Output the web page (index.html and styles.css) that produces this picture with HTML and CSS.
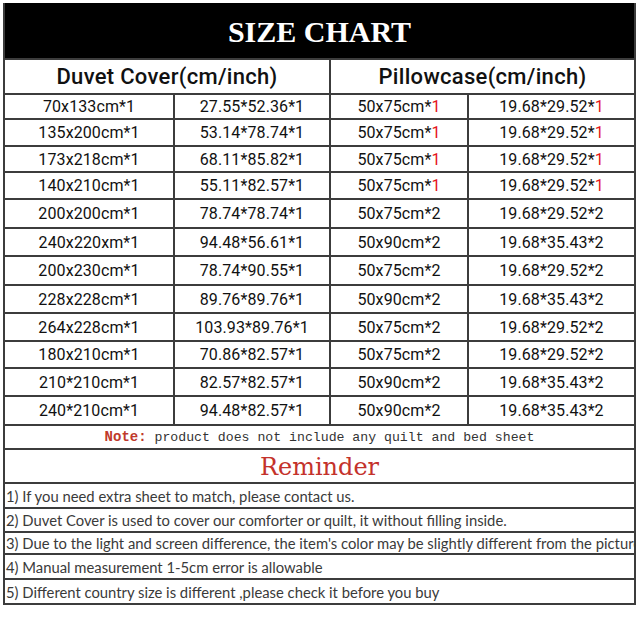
FILE: index.html
```html
<!DOCTYPE html>
<html>
<head>
<meta charset="utf-8">
<link rel="stylesheet" href="styles.css">
</head>
<body>
<div class="chart">
  <div class="title span4">SIZE CHART</div>
  <div class="head span2">Duvet Cover(cm/inch)</div>
  <div class="head span2 pil">Pillowcase(cm/inch)</div>

  <div class="c">70x133cm*1</div><div class="c">27.55*52.36*1</div><div class="c pil">50x75cm*<span class="r">1</span></div><div class="c">19.68*29.52*<span class="r">1</span></div>
  <div class="c">135x200cm*1</div><div class="c">53.14*78.74*1</div><div class="c pil">50x75cm*<span class="r">1</span></div><div class="c">19.68*29.52*<span class="r">1</span></div>
  <div class="c">173x218cm*1</div><div class="c">68.11*85.82*1</div><div class="c pil">50x75cm*<span class="r">1</span></div><div class="c">19.68*29.52*<span class="r">1</span></div>
  <div class="c">140x210cm*1</div><div class="c">55.11*82.57*1</div><div class="c pil">50x75cm*<span class="r">1</span></div><div class="c">19.68*29.52*<span class="r">1</span></div>
  <div class="c">200x200cm*1</div><div class="c">78.74*78.74*1</div><div class="c pil">50x75cm*2</div><div class="c">19.68*29.52*2</div>
  <div class="c">240x220xm*1</div><div class="c">94.48*56.61*1</div><div class="c pil">50x90cm*2</div><div class="c">19.68*35.43*2</div>
  <div class="c">200x230cm*1</div><div class="c">78.74*90.55*1</div><div class="c pil">50x75cm*2</div><div class="c">19.68*29.52*2</div>
  <div class="c">228x228cm*1</div><div class="c">89.76*89.76*1</div><div class="c pil">50x90cm*2</div><div class="c">19.68*35.43*2</div>
  <div class="c">264x228cm*1</div><div class="c">103.93*89.76*1</div><div class="c pil">50x75cm*2</div><div class="c">19.68*29.52*2</div>
  <div class="c">180x210cm*1</div><div class="c">70.86*82.57*1</div><div class="c pil">50x75cm*2</div><div class="c">19.68*29.52*2</div>
  <div class="c">210*210cm*1</div><div class="c">82.57*82.57*1</div><div class="c pil">50x90cm*2</div><div class="c">19.68*35.43*2</div>
  <div class="c">240*210cm*1</div><div class="c">94.48*82.57*1</div><div class="c pil">50x90cm*2</div><div class="c">19.68*35.43*2</div>

  <div class="note span4"><span class="note-label">Note:</span> product does not include any quilt and bed sheet</div>
  <div class="reminder span4">Reminder</div>
  <div class="line span4">1) If you need extra sheet to match, please contact us.</div>
  <div class="line span4">2) Duvet Cover is used to cover our comforter or quilt, it without filling inside.</div>
  <div class="line span4">3) Due to the light and screen difference, the item's color may be slightly different from the picture</div>
  <div class="line span4">4) Manual measurement 1-5cm error is allowable</div>
  <div class="line span4">5) Different country size is different ,please check it before you buy</div>
</div>
</body>
</html>
```

FILE: styles.css
```css
html, body {
  margin: 0;
  padding: 0;
  background: #ffffff;
}
body {
  padding: 3px 0 0 3px;
}
.chart {
  width: 633px;
  box-sizing: border-box;
  display: grid;
  grid-template-columns: 168px 154px 136px 165px;
  grid-template-rows: 55px 33px 23px 25px 24px 25px 27px 26px 27px 26px 26px 25px 26px 27px 22px 32px 23px 22px 20px 23px 23px;
  gap: 2px;
  padding: 0 2px 2px 2px;
  background: #3c3c3c;
}
.span4 { grid-column: 1 / 5; }
.span2 { grid-column: span 2; }
.title {
  background: #000;
  color: #fff;
  font-family: "Liberation Serif", serif;
  font-weight: bold;
  font-size: 30px;
  display: flex;
  align-items: center;
  justify-content: center;
  padding-top: 2px;
}
.head, .c {
  background: #fff;
  display: flex;
  align-items: center;
  justify-content: center;
  font-family: Roboto, "DejaVu Sans", sans-serif;
  color: #111;
}
.head {
  font-size: 22px;
  font-weight: 500;
  letter-spacing: 0.3px;
}
.c {
  font-size: 16px;
  letter-spacing: 0.1px;
}
.pil {
  box-shadow: -1px 0 0 #3c3c3c;
}
.r { color: #e4141b; }
.note {
  background: #fff;
  display: flex;
  align-items: center;
  justify-content: center;
  font-family: "Liberation Mono", monospace;
  font-size: 13.2px;
  color: #333;
  white-space: pre;
}
.note-label {
  color: #c0392b;
  font-weight: bold;
  font-size: 14px;
}
.reminder {
  background: #fff;
  display: flex;
  align-items: center;
  justify-content: center;
  font-family: "DejaVu Serif", serif;
  font-size: 24px;
  color: #c4322b;
  padding-top: 2px;
}
.line {
  background: #fff;
  display: flex;
  align-items: center;
  padding-left: 1px;
  font-family: Lato, "Open Sans", sans-serif;
  font-size: 14.8px;
  color: #3a3a3a;
  white-space: nowrap;
  overflow: hidden;
}
```
